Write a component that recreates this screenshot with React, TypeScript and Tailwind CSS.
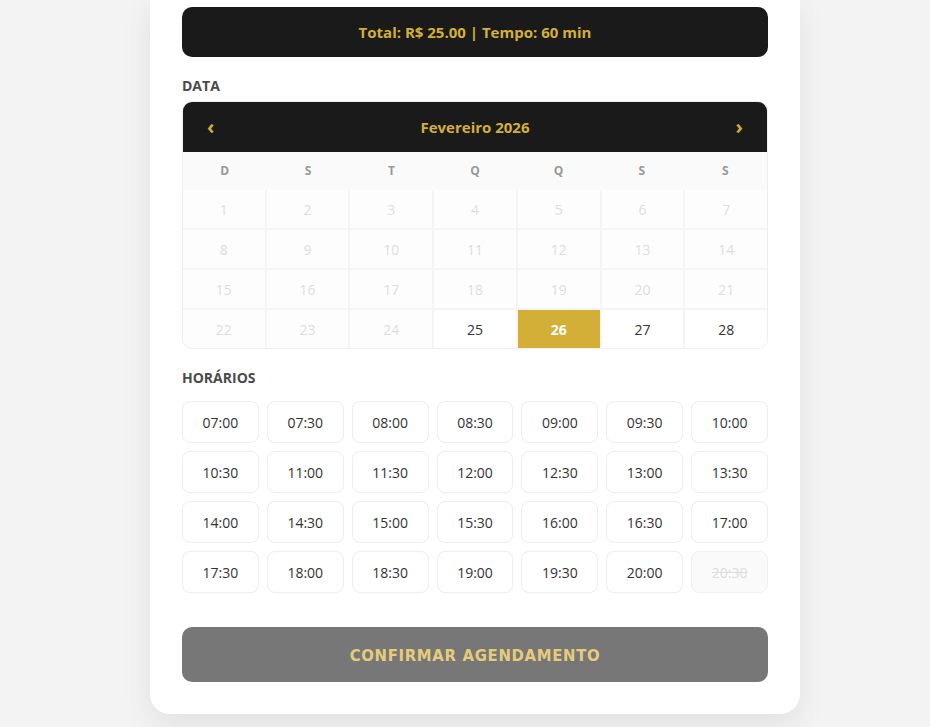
const weekDays = ['D', 'S', 'T', 'Q', 'Q', 'S', 'S']

const times = [
  '07:00', '07:30', '08:00', '08:30', '09:00', '09:30', '10:00',
  '10:30', '11:00', '11:30', '12:00', '12:30', '13:00', '13:30',
  '14:00', '14:30', '15:00', '15:30', '16:00', '16:30', '17:00',
  '17:30', '18:00', '18:30', '19:00', '19:30', '20:00', '20:30',
]

const days = Array.from({ length: 28 }, (_, i) => i + 1)

export default function App() {
  const selected = 26

  return (
    <div className="min-h-[727px] bg-[#f3f3f3] pl-5 font-['Open_Sans',sans-serif]">
      <div className="mx-auto w-[650px] rounded-b-[20px] bg-white px-8 pb-8 pt-[7px] shadow-[0_10px_30px_rgba(0,0,0,0.08)]">
        <div className="flex h-[50px] items-center justify-center rounded-[10px] bg-[#1a1a1a] text-[15px] font-bold text-[#d4af37]">
          Total: R$ 25.00 | Tempo: 60 min
        </div>

        <p className="mb-[6px] mt-[20px] text-[14px] font-bold leading-[18px] text-[#4a4a4a]">DATA</p>

        <div className="overflow-hidden rounded-[10px] border border-[#eee]">
          <div className="flex h-[50px] items-center justify-between bg-[#1a1a1a] px-6 text-[#d4af37]">
            <span className="text-[20px] font-bold leading-none">‹</span>
            <span className="text-[15px] font-bold">Fevereiro 2026</span>
            <span className="text-[20px] font-bold leading-none">›</span>
          </div>
          <div className="grid grid-cols-7 bg-[#fafafa]">
            {weekDays.map((d, i) => (
              <div key={i} className="flex h-[38px] items-center justify-center text-[12px] font-bold text-[#999]">
                {d}
              </div>
            ))}
          </div>
          <div className="grid grid-cols-7 gap-[2px] bg-[#f5f5f5]">
            {days.map((d) => {
              const disabled = d < 25
              const isSel = d === selected
              return (
                <div
                  key={d}
                  className={
                    isSel
                      ? 'flex h-[38px] items-center justify-center bg-[#d4af37] text-[14px] font-bold text-white'
                      : disabled
                        ? 'flex h-[38px] items-center justify-center bg-[#fdfdfd] text-[14px] text-[#ddd]'
                        : 'flex h-[38px] items-center justify-center bg-white text-[14px] text-[#333]'
                  }
                >
                  {d}
                </div>
              )
            })}
          </div>
        </div>

        <p className="mb-[14px] mt-[20px] text-[14px] font-bold leading-[18px] text-[#4a4a4a]">HORÁRIOS</p>

        <div className="grid grid-cols-7 gap-2">
          {times.map((t) => {
            const disabled = t === '20:30'
            return (
              <button
                key={t}
                type="button"
                className={
                  disabled
                    ? 'flex h-[42px] items-center justify-center rounded-lg border border-[#f0f0f0] bg-[#fafafa] text-[14px] text-[#ddd] line-through'
                    : 'flex h-[42px] items-center justify-center rounded-lg border border-[#eee] bg-white text-[14px] text-[#333]'
                }
              >
                {t}
              </button>
            )
          })}
        </div>

        <button
          type="button"
          className="mt-[34px] flex h-[55px] w-full items-center justify-center rounded-[10px] bg-[#777] pt-[3px] font-['DejaVu_Sans_Condensed','DejaVu_Sans',sans-serif] text-[16.5px] font-bold uppercase tracking-[0.7px] font-stretch-condensed text-[#e6cc7a]"
        >
          Confirmar Agendamento
        </button>
      </div>
    </div>
  )
}
